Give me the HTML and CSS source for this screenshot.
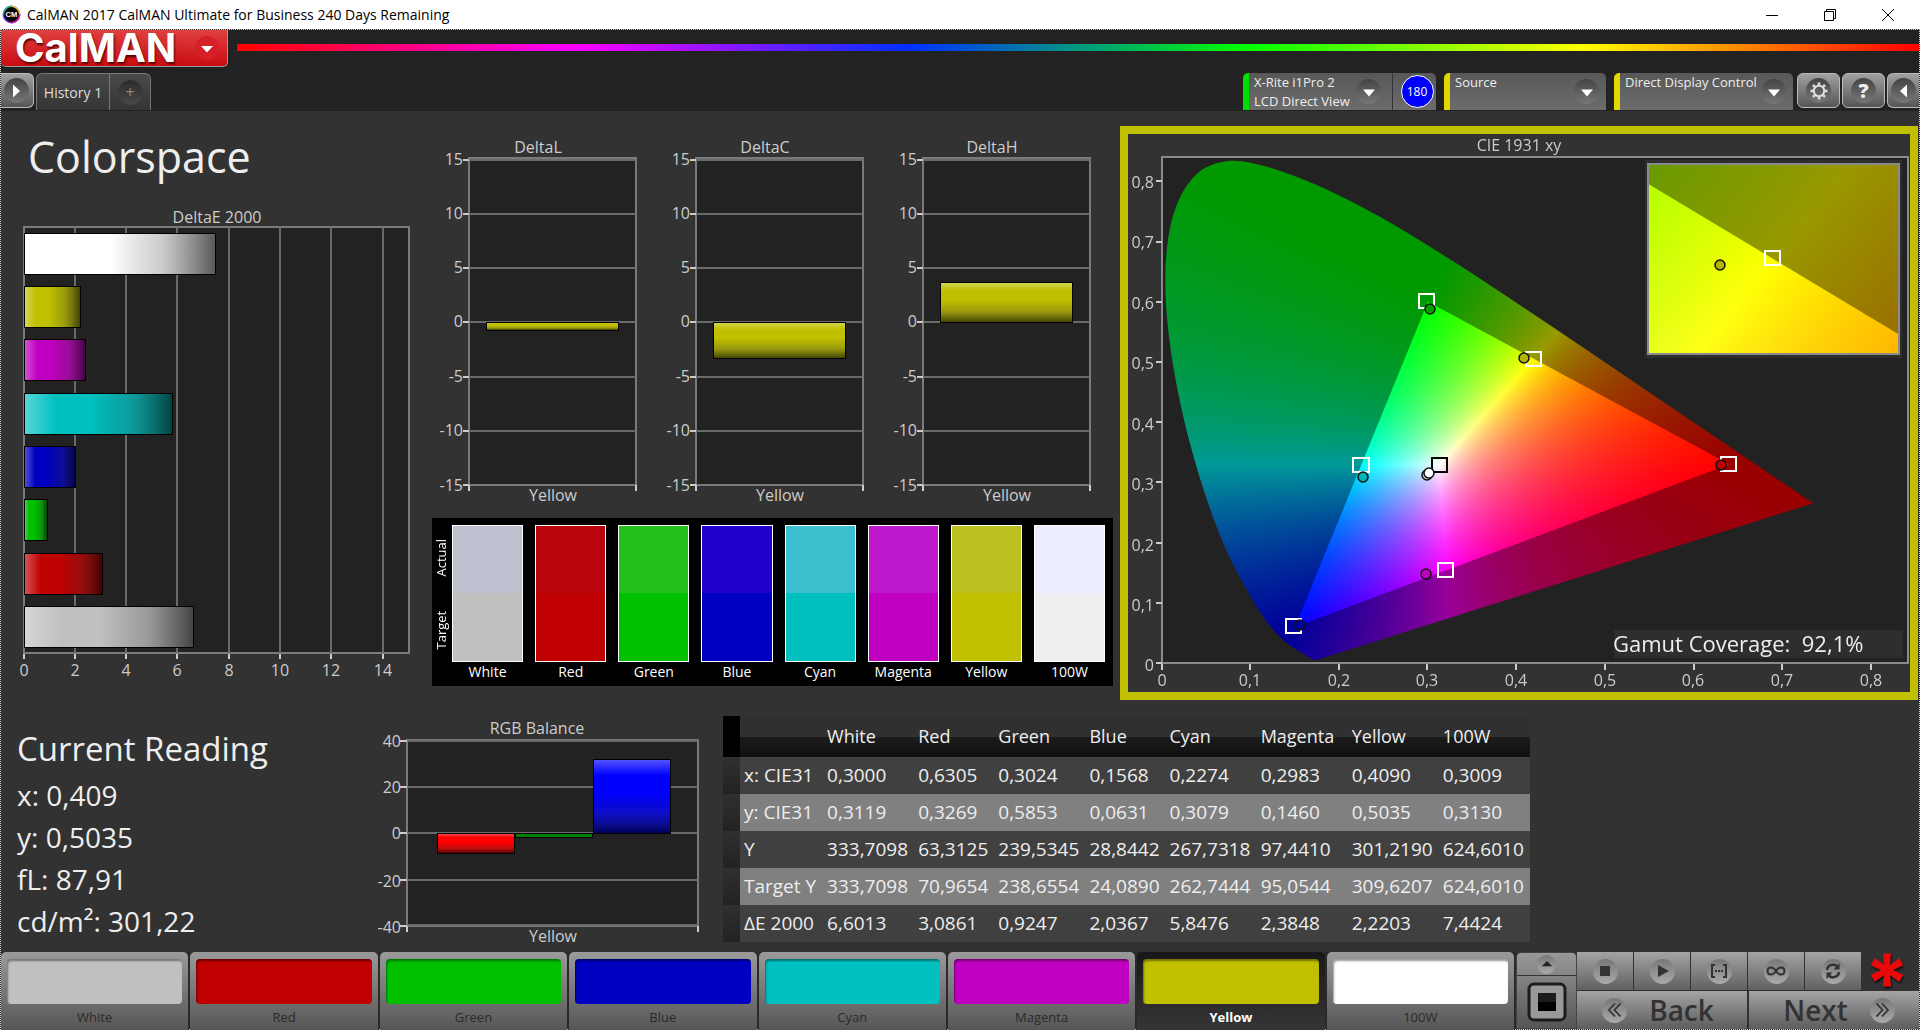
FILE: index.html
```html
<!DOCTYPE html>
<html lang="en">
<head>
<meta charset="utf-8">
<title>CalMAN 2017 CalMAN Ultimate for Business 240 Days Remaining</title>
<link rel="stylesheet" href="styles.css">
</head>
<body>
<svg class="defs" aria-hidden="true">
  <defs>
    <linearGradient id="shade-x" x1="0" y1="0" x2="1" y2="0">
      <stop offset="0" stop-color="#fff" stop-opacity=".35"/>
      <stop offset=".22" stop-color="#fff" stop-opacity="0"/>
      <stop offset=".45" stop-color="#222" stop-opacity="0"/>
      <stop offset=".72" stop-color="#333" stop-opacity=".25"/>
      <stop offset="1" stop-color="#000" stop-opacity=".65"/>
    </linearGradient>
    <linearGradient id="shade-y" x1="0" y1="0" x2="0" y2="1">
      <stop offset="0" stop-color="#fff" stop-opacity=".35"/>
      <stop offset=".22" stop-color="#fff" stop-opacity="0"/>
      <stop offset=".45" stop-color="#222" stop-opacity="0"/>
      <stop offset=".72" stop-color="#333" stop-opacity=".25"/>
      <stop offset="1" stop-color="#000" stop-opacity=".65"/>
    </linearGradient>
  </defs>
</svg>

<header class="titlebar">
  <svg class="app-icon" viewBox="0 0 20 20" aria-hidden="true">
    <circle cx="10" cy="10" r="8.6" fill="#000" stroke="#8a2be2" stroke-width="1.6"/>
    <path d="M10 1.4A8.6 8.6 0 0 1 18.6 10" fill="none" stroke="#e6d21e" stroke-width="1.6"/>
    <path d="M18.6 10A8.600 8.600 0 0 1 10 18.600" fill="none" stroke="#e0209a" stroke-width="1.6"/>
    <path d="M1.400 10A8.600 8.600 0 0 1 10 1.400" fill="none" stroke="#1fc47a" stroke-width="1.6"/>
    <text x="10" y="13" class="app-icon-text">CM</text>
  </svg>
  <span class="window-title">CalMAN 2017 CalMAN Ultimate for Business 240 Days Remaining</span>
  <div class="window-buttons">
    <button type="button" aria-label="Minimize"><svg viewBox="0 0 14 14"><path d="M1 7.500H13"/></svg></button>
    <button type="button" aria-label="Restore"><svg viewBox="0 0 14 14"><path d="M1.500 3.500H10.500V12.500H1.500ZM3.500 3.500V1.500H12.500V10.500H10.500"/></svg></button>
    <button type="button" aria-label="Close"><svg viewBox="0 0 14 14"><path d="M1 1L13 13M13 1L1 13"/></svg></button>
  </div>
</header>

<div class="workspace">
  <div class="topbar">
    <div class="brand-row">
      <button type="button" class="brand">CalMAN
        <svg class="brand-knob" viewBox="0 0 24 24" aria-hidden="true"><circle cx="12" cy="12" r="12" fill="#d5202a"/><path d="M6 10H18L12 16.500Z" fill="#fff"/></svg>
      </button>
      <div class="spectrum"></div>
    </div>
    <div class="tab-row">
      <button type="button" class="square-btn open-left" aria-label="Expand panel"><span class="knob"><svg viewBox="0 0 24 24"><path d="M9 5.500V18.500L16 12Z" fill="#fff"/></svg></span></button>
      <div class="tabs">
        <button type="button" class="tab">History 1</button>
        <button type="button" class="tab add" aria-label="Add tab"><span class="knob">+</span></button>
      </div>
      <div class="devices">
        <div class="device meter">
          <button type="button" class="device-main"><span class="device-name">X-Rite i1Pro 2<br>LCD Direct View</span><span class="knob"><svg viewBox="0 0 24 24"><path d="M6 9.500H18L12 16.500Z" fill="#fff"/></svg></span></button>
          <span class="badge-cell"><span class="badge">180</span></span>
        </div>
        <button type="button" class="device source"><span class="device-name">Source</span><span class="knob"><svg viewBox="0 0 24 24"><path d="M6 9.500H18L12 16.500Z" fill="#fff"/></svg></span></button>
        <button type="button" class="device display"><span class="device-name">Direct Display Control</span><span class="knob"><svg viewBox="0 0 24 24"><path d="M6 9.500H18L12 16.500Z" fill="#fff"/></svg></span></button>
      </div>
      <div class="tool-buttons">
        <button type="button" class="square-btn" aria-label="Settings"><span class="knob"><svg viewBox="0 0 24 24"><circle cx="12" cy="12" r="5.200" fill="none" stroke="#ddd" stroke-width="2"/><path d="M12 3.500V6.200M12 17.800V20.500M3.500 12H6.200M17.800 12H20.500M6 6L7.900 7.900M16.100 16.100L18 18M18 6L16.100 7.900M7.900 16.100L6 18" stroke="#ddd" stroke-width="2.600"/></svg></span></button>
        <button type="button" class="square-btn help" aria-label="Help"><span class="knob">?</span></button>
        <button type="button" class="square-btn open-right" aria-label="Collapse panel"><span class="knob"><svg viewBox="0 0 24 24"><path d="M15 5.500V18.500L8 12Z" fill="#fff"/></svg></span></button>
      </div>
    </div>
  </div>

  <main>
    <div class="upper">
      <section class="colorspace">
        <h1>Colorspace</h1>
        <svg class="chart" viewBox="0 0 420 490" role="img" aria-label="DeltaE 2000">
          <text class="label mid" x="216" y="25">DeltaE 2000</text>
          <rect class="plot" x="23" y="29" width="385" height="426"/>
          <path class="grid" d="M74 29V455M125 29V455M176 29V455M228 29V455M279 29V455M330 29V455M382 29V455"/>
          <path class="tick" d="M23 456V461M74 456V461M125 456V461M176 456V461M228 456V461M279 456V461M330 456V461M382 456V461"/>
          <g class="bar">
            <rect x="23" y="35" width="191" height="41" fill="#fff"/><rect x="23" y="35" width="191" height="41" fill="url(#shade-x)"/>
            <rect x="23" y="88" width="56" height="41" fill="#c0c000"/><rect x="23" y="88" width="56" height="41" fill="url(#shade-x)"/>
            <rect x="23" y="141" width="61" height="41" fill="#c000c0"/><rect x="23" y="141" width="61" height="41" fill="url(#shade-x)"/>
            <rect x="23" y="195" width="148" height="41" fill="#00c0c0"/><rect x="23" y="195" width="148" height="41" fill="url(#shade-x)"/>
            <rect x="23" y="248" width="51" height="41" fill="#0000c0"/><rect x="23" y="248" width="51" height="41" fill="url(#shade-x)"/>
            <rect x="23" y="301" width="23" height="41" fill="#00c000"/><rect x="23" y="301" width="23" height="41" fill="url(#shade-x)"/>
            <rect x="23" y="355" width="78" height="41" fill="#c00000"/><rect x="23" y="355" width="78" height="41" fill="url(#shade-x)"/>
            <rect x="23" y="408" width="169" height="41" fill="#c0c0c0"/><rect x="23" y="408" width="169" height="41" fill="url(#shade-x)"/>
          </g>
          <g class="label mid">
            <text x="23" y="478">0</text><text x="74" y="478">2</text><text x="125" y="478">4</text><text x="176" y="478">6</text>
            <text x="228" y="478">8</text><text x="279" y="478">10</text><text x="330" y="478">12</text><text x="382" y="478">14</text>
          </g>
        </svg>
      </section>

      <section class="deltas">
        <div class="delta-charts">
          <svg class="chart" viewBox="0 0 227 376" role="img" aria-label="DeltaL">
            <text class="label mid" x="117" y="18">DeltaL</text>
            <rect class="plot" x="48" y="23" width="167" height="327"/>
            <path class="grid" d="M48 25H215M48 79H215M48 133H215M48 187H215M48 242H215M48 296H215"/>
            <path class="tick" d="M42 25H48M42 79H48M42 133H48M42 187H48M42 242H48M42 296H48M42 350H48M48 350V356M215 350V356"/>
            <g class="bar"><rect x="65" y="187" width="132" height="8" fill="#c0c000"/><rect x="65" y="187" width="132" height="8" fill="url(#shade-y)"/></g>
            <g class="label end"><text x="42" y="30">15</text><text x="42" y="84">10</text><text x="42" y="138">5</text><text x="42" y="192">0</text><text x="42" y="247">-5</text><text x="42" y="301">-10</text><text x="42" y="356">-15</text></g>
            <text class="label mid" x="132" y="366">Yellow</text>
          </svg>
          <svg class="chart" viewBox="0 0 227 376" role="img" aria-label="DeltaC">
            <text class="label mid" x="117" y="18">DeltaC</text>
            <rect class="plot" x="48" y="23" width="167" height="327"/>
            <path class="grid" d="M48 25H215M48 79H215M48 133H215M48 187H215M48 242H215M48 296H215"/>
            <path class="tick" d="M42 25H48M42 79H48M42 133H48M42 187H48M42 242H48M42 296H48M42 350H48M48 350V356M215 350V356"/>
            <g class="bar"><rect x="65" y="187" width="132" height="36" fill="#c0c000"/><rect x="65" y="187" width="132" height="36" fill="url(#shade-y)"/></g>
            <g class="label end"><text x="42" y="30">15</text><text x="42" y="84">10</text><text x="42" y="138">5</text><text x="42" y="192">0</text><text x="42" y="247">-5</text><text x="42" y="301">-10</text><text x="42" y="356">-15</text></g>
            <text class="label mid" x="132" y="366">Yellow</text>
          </svg>
          <svg class="chart" viewBox="0 0 227 376" role="img" aria-label="DeltaH">
            <text class="label mid" x="117" y="18">DeltaH</text>
            <rect class="plot" x="48" y="23" width="167" height="327"/>
            <path class="grid" d="M48 25H215M48 79H215M48 133H215M48 187H215M48 242H215M48 296H215"/>
            <path class="tick" d="M42 25H48M42 79H48M42 133H48M42 187H48M42 242H48M42 296H48M42 350H48M48 350V356M215 350V356"/>
            <g class="bar"><rect x="65" y="147" width="132" height="40" fill="#c0c000"/><rect x="65" y="147" width="132" height="40" fill="url(#shade-y)"/></g>
            <g class="label end"><text x="42" y="30">15</text><text x="42" y="84">10</text><text x="42" y="138">5</text><text x="42" y="192">0</text><text x="42" y="247">-5</text><text x="42" y="301">-10</text><text x="42" y="356">-15</text></g>
            <text class="label mid" x="132" y="366">Yellow</text>
          </svg>
        </div>
        <div class="swatches">
          <div class="swatch-axis"><span>Actual</span><span>Target</span></div>
          <figure class="pair white"><div class="chip"></div><figcaption>White</figcaption></figure>
          <figure class="pair red"><div class="chip"></div><figcaption>Red</figcaption></figure>
          <figure class="pair green"><div class="chip"></div><figcaption>Green</figcaption></figure>
          <figure class="pair blue"><div class="chip"></div><figcaption>Blue</figcaption></figure>
          <figure class="pair cyan"><div class="chip"></div><figcaption>Cyan</figcaption></figure>
          <figure class="pair magenta"><div class="chip"></div><figcaption>Magenta</figcaption></figure>
          <figure class="pair yellow"><div class="chip"></div><figcaption>Yellow</figcaption></figure>
          <figure class="pair full"><div class="chip"></div><figcaption>100W</figcaption></figure>
        </div>
      </section>

      <section class="cie">
        <canvas id="cie" width="782" height="558"></canvas>
        <svg class="chart" viewBox="0 0 782 558" role="img" aria-label="CIE 1931 xy">
          <text class="label mid" x="391" y="17">CIE 1931 xy</text>
          <rect class="frame" x="34" y="23" width="746" height="506"/>
          <rect class="frame" x="520" y="30" width="251" height="190"/>
          <path class="tick" d="M28 529H34M28 469H34M28 409H34M28 348H34M28 288H34M28 228H34M28 168H34M28 108H34M28 47H34M34 530V536M122 530V536M211 530V536M299 530V536M388 530V536M477 530V536M566 530V536M654 530V536M743 530V536"/>
          <g class="label end"><text x="26" y="537">0</text><text x="26" y="477">0,1</text><text x="26" y="417">0,2</text><text x="26" y="356">0,3</text><text x="26" y="296">0,4</text><text x="26" y="235">0,5</text><text x="26" y="175">0,6</text><text x="26" y="114">0,7</text><text x="26" y="54">0,8</text></g>
          <g class="label mid"><text x="34" y="552">0</text><text x="122" y="552">0,1</text><text x="211" y="552">0,2</text><text x="299" y="552">0,3</text><text x="388" y="552">0,4</text><text x="477" y="552">0,5</text><text x="565" y="552">0,6</text><text x="654" y="552">0,7</text><text x="743" y="552">0,8</text></g>
          <g class="target">
            <rect x="291" y="160" width="15" height="14"/><rect x="398" y="218" width="15" height="14"/><rect x="593" y="323" width="15" height="14"/>
            <rect x="225" y="324" width="16" height="14"/><rect x="310" y="429" width="15" height="14"/><rect x="158" y="485" width="15" height="14"/>
            <rect x="637" y="117" width="15" height="14"/><rect class="dark" x="304" y="324" width="15" height="14"/>
          </g>
          <g class="reading">
            <circle cx="302" cy="175" r="5" fill="#00a000"/><circle cx="396" cy="224" r="5" fill="#b4b400"/><circle cx="593" cy="331" r="5" fill="#c00000"/>
            <circle cx="235" cy="343" r="5" fill="#00b4b4"/><circle cx="298" cy="440" r="5" fill="#c000c0"/><circle cx="172" cy="491" r="5" fill="#0000a0"/>
            <circle cx="299" cy="341" r="5" fill="#c0c0c0"/><circle cx="301" cy="339" r="5" fill="#fff"/><circle cx="592" cy="131" r="5" fill="#b4b400"/>
          </g>
          <rect x="486" y="496" width="289" height="28" fill="#2e2e2e"/>
          <text class="coverage" x="485" y="518">Gamut Coverage:&#160; 92,1%</text>
        </svg>
      </section>
    </div>

    <div class="lower">
      <section class="current">
        <h2>Current Reading</h2>
        <p>x: 0,409</p>
        <p>y: 0,5035</p>
        <p>fL: 87,91</p>
        <p>cd/m²: 301,22</p>
      </section>
      <svg class="chart" viewBox="0 0 350 228" role="img" aria-label="RGB Balance">
        <text class="label mid" x="164" y="18">RGB Balance</text>
        <rect class="plot" x="34" y="24" width="291" height="186"/>
        <path class="grid" d="M34 25H325M34 71H325M34 117H325M34 164H325M34 209H325"/>
        <path class="tick" d="M27 25H34M27 71H34M27 117H34M27 164H34M27 210H34M34 210V216M325 210V216"/>
        <g class="bar">
          <rect x="64" y="117" width="77" height="20" fill="#f00"/><rect x="64" y="117" width="77" height="20" fill="url(#shade-y)"/>
          <rect x="142" y="117" width="77" height="4" fill="#008000"/>
          <rect x="220" y="43" width="77" height="74" fill="#00f"/><rect x="220" y="43" width="77" height="74" fill="url(#shade-y)"/>
        </g>
        <g class="label end"><text x="28" y="31">40</text><text x="28" y="77">20</text><text x="28" y="123">0</text><text x="28" y="171">-20</text><text x="28" y="217">-40</text></g>
        <text class="label mid" x="180" y="226">Yellow</text>
      </svg>
      <table class="data">
        <colgroup><col class="w-stub"><col class="w-name"><col class="w-wide"><col class="w-slim"><col class="w-wide"><col class="w-slim"><col class="w-wide"><col class="w-wide"><col class="w-wide"><col class="w-wide"></colgroup>
        <thead><tr><td class="stub"></td><td></td><th scope="col">White</th><th scope="col">Red</th><th scope="col">Green</th><th scope="col">Blue</th><th scope="col">Cyan</th><th scope="col">Magenta</th><th scope="col">Yellow</th><th scope="col">100W</th></tr></thead>
        <tbody>
          <tr><td class="stub"></td><th scope="row">x: CIE31</th><td>0,3000</td><td>0,6305</td><td>0,3024</td><td>0,1568</td><td>0,2274</td><td>0,2983</td><td>0,4090</td><td>0,3009</td></tr>
          <tr><td class="stub"></td><th scope="row">y: CIE31</th><td>0,3119</td><td>0,3269</td><td>0,5853</td><td>0,0631</td><td>0,3079</td><td>0,1460</td><td>0,5035</td><td>0,3130</td></tr>
          <tr><td class="stub"></td><th scope="row">Y</th><td>333,7098</td><td>63,3125</td><td>239,5345</td><td>28,8442</td><td>267,7318</td><td>97,4410</td><td>301,2190</td><td>624,6010</td></tr>
          <tr><td class="stub"></td><th scope="row">Target Y</th><td>333,7098</td><td>70,9654</td><td>238,6554</td><td>24,0890</td><td>262,7444</td><td>95,0544</td><td>309,6207</td><td>624,6010</td></tr>
          <tr><td class="stub"></td><th scope="row">ΔE 2000</th><td>6,6013</td><td>3,0861</td><td>0,9247</td><td>2,0367</td><td>5,8476</td><td>2,3848</td><td>2,2203</td><td>7,4424</td></tr>
        </tbody>
      </table>
    </div>
  </main>

  <footer class="bottombar">
    <div class="patches">
      <button type="button" class="patch white"><span class="patch-color"></span>White</button>
      <button type="button" class="patch red"><span class="patch-color"></span>Red</button>
      <button type="button" class="patch green"><span class="patch-color"></span>Green</button>
      <button type="button" class="patch blue"><span class="patch-color"></span>Blue</button>
      <button type="button" class="patch cyan"><span class="patch-color"></span>Cyan</button>
      <button type="button" class="patch magenta"><span class="patch-color"></span>Magenta</button>
      <button type="button" class="patch yellow active" aria-pressed="true"><span class="patch-color"></span>Yellow</button>
      <button type="button" class="patch full"><span class="patch-color"></span>100W</button>
    </div>
    <div class="window-toggle">
      <button type="button" class="up" aria-label="Show more"><span class="knob small"><svg viewBox="0 0 24 24"><path d="M5 15L12 8L19 15Z" fill="#222"/></svg></span></button>
      <button type="button" class="pattern" aria-label="Pattern window"><svg viewBox="0 0 40 40"><rect x="2" y="2" width="36" height="36" rx="5" fill="#999" stroke="#1c1c1c" stroke-width="3"/><rect x="11" y="11" width="18" height="18" fill="#000"/><rect x="11" y="11" width="18" height="9" fill="#1c1c1c"/></svg></button>
    </div>
    <div class="transport">
      <div class="media">
        <button type="button" aria-label="Stop"><span class="knob light"><svg viewBox="0 0 24 24"><rect x="7" y="7" width="10" height="10" fill="#333"/></svg></span></button>
        <button type="button" aria-label="Play"><span class="knob light"><svg viewBox="0 0 24 24"><path d="M8 6V18L19 12Z" fill="#333"/></svg></span></button>
        <button type="button" aria-label="Read series"><span class="knob light"><svg viewBox="0 0 24 24"><path d="M8 6H5V18H8M16 6H19V18H16" fill="none" stroke="#333" stroke-width="2"/><path d="M8 12H16" stroke="#333" stroke-width="2" stroke-dasharray="2 1"/></svg></span></button>
        <button type="button" aria-label="Read continuously"><span class="knob light"><svg viewBox="0 0 24 24"><path d="M12 12C9 7 3.500 7.500 3.500 12S9 17 12 12S20.500 7.500 20.500 12S15 17 12 12Z" fill="none" stroke="#333" stroke-width="2"/></svg></span></button>
        <button type="button" aria-label="Refresh"><span class="knob light"><svg viewBox="0 0 24 24"><path d="M6 11A6 6 0 0 1 17 8.500M18 13A6 6 0 0 1 7 15.500" fill="none" stroke="#333" stroke-width="2.500"/><path d="M18.500 4V10.500H12.500ZM5.500 20V13.500H11.500Z" fill="#333"/></svg></span></button>
        <svg class="star" viewBox="0 0 36 36" role="img" aria-label="Busy"><g fill="#e60a0a"><path id="ray" d="M15.500 18L14 1.500H22L20.500 18Z"/><use href="#ray" transform="rotate(60 18 18)"/><use href="#ray" transform="rotate(120 18 18)"/><use href="#ray" transform="rotate(180 18 18)"/><use href="#ray" transform="rotate(240 18 18)"/><use href="#ray" transform="rotate(300 18 18)"/></g></svg>
      </div>
      <div class="nav">
        <button type="button" class="back"><span class="knob light"><svg viewBox="0 0 24 24"><path d="M12 5.500L6 12L12 18.500M17.500 5.500L11.500 12L17.500 18.500" fill="none" stroke="#333" stroke-width="1.800"/></svg></span>Back</button>
        <button type="button" class="next">Next<span class="knob light"><svg viewBox="0 0 24 24"><path d="M12 5.500L18 12L12 18.500M6.500 5.500L12.500 12L6.500 18.500" fill="none" stroke="#333" stroke-width="1.800"/></svg></span></button>
      </div>
    </div>
  </footer>
</div>
<script src="cie.js"></script>
</body>
</html>
```
FILE: styles.css
```css
* { box-sizing: border-box; }
body {
  margin: 0;
  min-height: 100vh;
  display: flex;
  flex-direction: column;
  background: #323232;
  color: #eee;
  font-family: "Open Sans", "Noto Sans", sans-serif;
  font-size: 14px;
}
button { font: inherit; color: inherit; border: 0; padding: 0; margin: 0; background: none; }
h1, h2, p, figure { margin: 0; font-weight: 400; }
svg { display: block; }
.defs { position: absolute; width: 0; height: 0; }

/* Window title bar */
.titlebar { display: flex; align-items: center; height: 29px; padding: 0 3px 0 2px; background: #fff; color: #000; }
.app-icon { width: 19px; height: 19px; margin-right: 6px; }
.app-icon-text { font: bold 8px "Liberation Sans", sans-serif; fill: #fff; text-anchor: middle; }
.window-title { flex: 1; font-size: 14px; line-height: 28px; }
.window-buttons { display: flex; }
.window-buttons button { width: 58px; height: 28px; display: grid; place-items: center; }
.window-buttons svg { width: 14px; height: 14px; fill: none; stroke: #000; stroke-width: 1; }

.workspace { flex: 1; display: flex; flex-direction: column; border: 1px dotted #ccc; background: #323232; }

/* Brand and tabs */
.topbar { background: #222; height: 81px; display: flex; flex-direction: column; justify-content: space-between; }
.brand-row { display: flex; gap: 9px; }
.brand {
  width: 227px; height: 37px; padding: 0 8px 0 14px;
  display: flex; align-items: center; justify-content: space-between;
  background: linear-gradient(#e04040, #c90c10);
  border: 1px solid #999; border-width: 0 1px 1px 0; border-radius: 0 0 5px 5px;
  color: #fff; font: 700 40px/34px Inter, sans-serif; text-shadow: 1px 2px 2px #500;
}
.brand-knob { width: 24px; height: 24px; }
.spectrum {
  flex: 1; height: 7px; margin-top: 14px;
  background: linear-gradient(to right, #f00, #f0f, #0030ff, #0f0, #ff0, #f00);
}
.tab-row { display: flex; align-items: flex-start; height: 38px; }
.knob {
  width: 25px; height: 25px; border-radius: 50%; display: grid; place-items: center; flex: none;
  background: linear-gradient(#444, #777);
}
.knob svg { width: 24px; height: 24px; }
.knob.light { background: linear-gradient(#777, #aaa); }
.knob.small { width: 19px; height: 19px; background: linear-gradient(#777, #aaa); }
.knob.small svg { width: 18px; height: 18px; }
.square-btn {
  width: 32px; height: 35px; display: grid; place-items: center;
  border: 1px solid #bbb; border-radius: 6px; background: linear-gradient(#a0a0a0, #565656);
}
.square-btn.open-left { width: 33px; padding-right: 2px; border-radius: 0 6px 6px 0; border-left: 0; margin-right: 2px; }
.tabs { display: flex; height: 37px; border: 1px solid #777; border-bottom: 0; border-radius: 6px 6px 0 0; background: linear-gradient(#4a4a4a, #343434); }
.tab { width: 72px; color: #ddd; display: grid; place-items: center; }
.tab.add { width: 41px; border-left: 1px solid #777; color: #888; }
.tab.add .knob { background: linear-gradient(#2c2c2c, #484848); font-size: 16px; line-height: 24px; }
.devices { display: flex; gap: 8px; margin-left: auto; font-size: 13px; line-height: 19px; }
.device {
  display: flex; align-items: center; justify-content: space-between; height: 37px; text-align: left;
  border-left: 6px solid #e0d800; border-radius: 5px 5px 0 0; background: linear-gradient(#585858, #6c6c6c);
}
.device-name { align-self: flex-start; white-space: nowrap; padding-left: 5px; }
.device.meter { width: 193px; border-left-color: #0d0; }
.device-main { flex: 1; height: 100%; display: flex; align-items: center; justify-content: space-between; padding-right: 11px; text-align: left; }
.badge-cell { width: 44px; height: 100%; padding-left: 5px; display: grid; place-items: center; border-left: 1px solid #333; }
.badge { width: 33px; height: 33px; border: 1px solid #fff; border-radius: 50%; background: #00f; color: #fff; font-size: 12px; line-height: 31px; text-align: center; }
.device.source { width: 162px; padding-right: 7px; }
.device.display { width: 179px; padding-right: 7px; }
.device.display .device-name { margin-right: -8px; }
.tool-buttons { display: flex; gap: 2px; padding-left: 4px; }
.tool-buttons .square-btn { width: 43px; }
.tool-buttons .open-right { width: 32px; border-radius: 6px 0 0 6px; border-right: 0; }
.help .knob { font-size: 20px; font-weight: 800; line-height: 24px; }

/* Charts */
.chart { width: 100%; height: auto; }
.label { font-size: 16px; fill: #ccc; }
.mid { text-anchor: middle; }
.end { text-anchor: end; }
.plot { fill: #222; stroke: #7a7a7a; stroke-width: 2; }
.frame { fill: none; stroke: #8a8a8a; stroke-width: 2; }
.grid { fill: none; stroke: #6a6a6a; stroke-width: 2; }
.tick { fill: none; stroke: #ccc; stroke-width: 2; }
.bar rect { stroke: #000; stroke-width: 1; shape-rendering: crispEdges; }

main { flex: 1; display: flex; flex-direction: column; gap: 16px; padding: 15px 0 8px; }
.upper { display: grid; grid-template-columns: 420fr 698fr 800fr; align-items: start; }
h1 { font-size: 43px; line-height: 61px; height: 72px; padding-left: 27px; }
.delta-charts { display: grid; grid-template-columns: repeat(3, 1fr); padding: 9px 17px 0 0; }
.swatches { display: flex; gap: 12px; margin: 7px 6px 0 11px; padding: 7px 8px 0 0; height: 168px; background: #000; }
.swatch-axis { width: 8px; display: flex; flex-direction: column; gap: 8px; height: 137px; }
.swatch-axis span { flex: 1; writing-mode: vertical-rl; transform: rotate(180deg); text-align: center; line-height: 18px; font-size: 13px; color: #fff; }
.pair { flex: 1; min-width: 0; text-align: center; line-height: 20px; color: #fff; }
.chip { height: 137px; border: 1px solid #fff; background: linear-gradient(var(--actual) 50%, var(--target) 50%); }
.white { --actual: #bec0d0; --target: #c0c0c0; }
.red { --actual: #b8040c; --target: #c00000; }
.green { --actual: #22c01a; --target: #00c000; }
.blue { --actual: #2000cc; --target: #0000c0; }
.cyan { --actual: #3cc0d0; --target: #00c0c0; }
.magenta { --actual: #bc18cc; --target: #c000c0; }
.yellow { --actual: #bcc020; --target: #c0c000; }
.full { --actual: #eaeeff; --target: #eeeeee; }
.cie { display: grid; border: 8px solid #c0c000; margin: 0 1px; }
.cie canvas, .cie .chart { grid-area: 1 / 1; width: 100%; height: auto; }
.coverage { font-size: 22px; fill: #eee; white-space: pre; }
.target rect { fill: none; stroke: #fff; stroke-width: 2; }
.target .dark { stroke: #000; }
.reading circle { stroke: #111; stroke-width: 1.5; }

.lower { display: grid; grid-template-columns: 372fr 350fr 807fr 389fr; align-items: start; }
.current { padding: 7px 0 0 16px; font-size: 28px; line-height: 42px; }
h2 { font-size: 33px; line-height: 51px; }
.data { width: 100%; table-layout: fixed; border-collapse: collapse; font-size: 19px; line-height: 37px; }
.data th, .data td { padding: 0 0 0 4px; font-weight: 400; text-align: left; white-space: nowrap; }
.data thead { background: linear-gradient(#303030 50%, #1c1c1c 50%, #101010); font-size: 18px; line-height: 41px; }
.data thead tr { height: 41px; }
.data tbody tr { height: 37px; background: #404040; }
.data tbody tr:nth-child(even) { background: #808080; }
.data .stub { background: linear-gradient(#303030, #222); }
.data thead .stub { background: #000; }
.w-stub { width: 17px; }
.w-name { width: 83px; }
.w-wide { width: 91px; }
.w-slim { width: 80px; }

/* Bottom bar */
.bottombar { display: flex; height: 77px; }
.patches { flex: 1; display: grid; grid-template-columns: repeat(8, 1fr); background: #2a2a2a; }
.patch {
  display: flex; flex-direction: column; align-items: stretch; padding: 7px 6px 0; margin: 0 2px 0 0;
  font-size: 13px; line-height: 27px; color: #2a2a2a;
  border-radius: 5px 5px 0 0; background: linear-gradient(#9a9a9a, #555);
}
.patch-color { height: 45px; border-radius: 4px; background: var(--target); box-shadow: inset 1px 2px 2px rgba(0, 0, 0, .4); }
.patch.full .patch-color { background: #fff; }
.patch.active { background: linear-gradient(#181818, #363636); color: #fff; font-weight: 700; }
.window-toggle { width: 61px; display: flex; flex-direction: column; border: 1px solid #444; border-radius: 5px 5px 0 0; background: linear-gradient(#999, #555); }
.window-toggle .up { height: 23px; display: grid; place-items: center; border-bottom: 1px solid #333; }
.window-toggle .pattern { flex: 1; display: grid; place-items: center; }
.pattern svg { width: 40px; height: 40px; }
.transport { width: 342px; display: flex; flex-direction: column; gap: 1px; }
.media { display: flex; height: 38px; gap: 1px; }
.media button { width: 56px; display: grid; place-items: center; background: linear-gradient(#a4a4a4, #606060); }
.star { width: 36px; height: 36px; margin: 0 auto 0 7px; filter: drop-shadow(1px 2px 1px #111); }
.nav { display: grid; grid-template-columns: 1fr 1fr; gap: 2px; flex: 1; font-size: 28px; font-weight: 600; line-height: 36px; color: #333; }
.nav button { display: flex; align-items: center; justify-content: center; gap: 22px; background: linear-gradient(#a4a4a4, #5c5c5c); }
.nav .back { padding-right: 8px; }
.nav .next { padding-left: 10px; }
```
FILE: cie.js
```js
// Paints the CIE 1931 chromaticity diagram and its magnified inset.
const LOCUS = [
  [.1741,.005],[.1733,.0048],[.1714,.0051],[.1689,.0069],[.1644,.0109],[.1566,.0177],[.151,.0227],[.144,.0297],
  [.1355,.0399],[.1241,.0578],[.1096,.0868],[.0913,.1327],[.0687,.2007],[.0454,.295],[.0235,.4127],[.0082,.5384],
  [.0039,.6548],[.0139,.7502],[.0389,.812],[.0743,.8338],[.1142,.8262],[.1547,.8059],[.1929,.7816],[.2296,.7543],
  [.2658,.7243],[.3016,.6923],[.3373,.6589],[.3731,.6245],[.4087,.5896],[.4441,.5547],[.4788,.5202],[.5125,.4866],
  [.5448,.4544],[.5752,.4242],[.6029,.3965],[.627,.3725],[.6658,.334],[.6915,.3083],[.7079,.292],[.7347,.2653]
];
const GAMUT = [[.64, .33], [.3, .6], [.15, .06]];

function colorAt(x, y) {
  if (y < .001) y = .001;
  const X = x / y, Z = (1 - x - y) / y;
  const rgb = [
    3.2406 * X - 1.5372 - .4986 * Z,
    -.9689 * X + 1.8758 + .0415 * Z,
    .0557 * X - .204 + 1.057 * Z
  ].map(v => Math.max(v, 0));
  const top = Math.max(...rgb);
  return rgb.map(v => 255 * v / top);
}

// view: pixel box of the plot plus the chromaticity range it shows
function field(view, level) {
  const c = document.createElement('canvas');
  c.width = view.w; c.height = view.h;
  const g = c.getContext('2d'), img = g.createImageData(view.w, view.h);
  for (let j = 0, k = 0; j < view.h; j++) {
    for (let i = 0; i < view.w; i++, k += 4) {
      const rgb = colorAt(view.x0 + (i + .5) / view.sx, view.y0 + (view.h - j - .5) / view.sy);
      for (let n = 0; n < 3; n++) img.data[k + n] = rgb[n] * level;
      img.data[k + 3] = 255;
    }
  }
  g.putImageData(img, 0, 0);
  return c;
}

// Smooth outlines run through every point as a Catmull-Rom curve.
function paint(g, view, outline, level, smooth) {
  const pts = outline.map(([x, y]) => [
    view.left + (x - view.x0) * view.sx,
    view.top + view.h - (y - view.y0) * view.sy
  ]);
  g.save();
  g.beginPath();
  g.rect(view.left, view.top, view.w, view.h);
  g.clip();
  g.beginPath();
  g.moveTo(...pts[0]);
  for (let i = 1; i < pts.length; i++) {
    const b = pts[i - 1], c = pts[i];
    if (!smooth) { g.lineTo(...c); continue; }
    const a = pts[i - 2] || b, d = pts[i + 1] || c;
    g.bezierCurveTo(
      b[0] + (c[0] - a[0]) / 6, b[1] + (c[1] - a[1]) / 6,
      c[0] - (d[0] - b[0]) / 6, c[1] - (d[1] - b[1]) / 6,
      c[0], c[1]
    );
  }
  g.closePath();
  g.clip();
  g.drawImage(field(view, level), view.left, view.top);
  g.restore();
}

const g = document.getElementById('cie').getContext('2d');
const full = { left: 34, top: 23, w: 746, h: 506, x0: 0, y0: 0, sx: 886.5, sy: 602 };
const inset = { left: 520, top: 30, w: 251, h: 190, x0: .3943, y0: .4803, sx: 5020, sy: 3800 };
g.fillStyle = '#222';
g.fillRect(full.left, full.top, full.w, full.h);
paint(g, full, LOCUS, .6, true);
paint(g, full, GAMUT, 1, false);
g.fillStyle = '#2e2e2e';
g.fillRect(517, 26, 257, 198);
paint(g, inset, LOCUS, .6, true);
paint(g, inset, GAMUT, 1, false);
```
